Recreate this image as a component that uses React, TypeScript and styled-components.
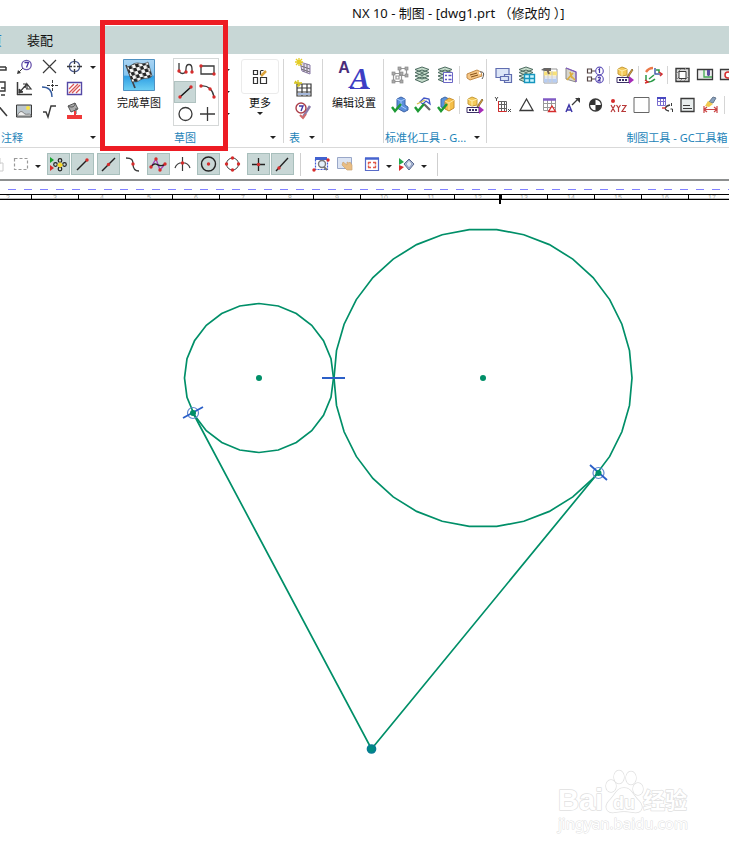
import React from "react";
import styled, { createGlobalStyle, css } from "styled-components";

const GlobalStyle = createGlobalStyle`
  * { box-sizing: border-box; }
  body { margin: 0; background: #fff; overflow-x: hidden; }
  button { font: inherit; color: inherit; margin: 0; padding: 0; border: 0; background: none; }
`;

const ink = "#3a3a3a";
const red = "#d62c2c";
const green = "#008f68";

/* ---------- layout parts ---------- */

const Page = styled.div`
  position: relative;
  display: flex;
  flex-direction: column;
  min-height: 100vh;
  overflow: hidden;
  color: #111;
  font: 11px/16px "Noto Sans", "Noto Sans CJK SC", sans-serif;
`;

const TitleBar = styled.header`
  height: 26px;
  padding-left: 352px;
  font-size: 13px;
  line-height: 26px;
  white-space: pre;
`;

const TabBar = styled.nav`
  display: flex;
  align-items: center;
  gap: 25px;
  height: 28px;
  background: #c8d7d6;
  font-size: 13px;
`;

const Tab = styled.button<{ $clipped?: boolean }>`
  white-space: nowrap;
  ${(p) => p.$clipped && css`margin-left: -24px; color: #1f7fc0;`}
`;

const Ribbon = styled.div`
  display: flex;
  height: 94px;
  border-bottom: 1px solid #d9d9d9;
`;

const Group = styled.section<{ $width: number; $ruled?: boolean }>`
  display: flex;
  flex: none;
  flex-direction: column;
  justify-content: space-between;
  width: ${(p) => p.$width}px;
  background: ${(p) =>
    p.$ruled ? "linear-gradient(#d5d5d5, #d5d5d5) right 5px / 1px 84px no-repeat" : "none"};
`;

const GroupFooter = styled.footer<{ $indent?: number }>`
  display: flex;
  height: 19px;
  padding-left: ${(p) => p.$indent ?? 0}px;
  color: #1c83b8;
  line-height: 20px;
`;

const GroupName = styled.span<{ $start?: boolean }>`
  flex: 1;
  text-align: ${(p) => (p.$start ? "left" : "center")};
  white-space: nowrap;
`;

const ToolRows = styled.div<{ $rowHeight: number; $top: number; $left: number }>`
  display: grid;
  grid-auto-rows: ${(p) => p.$rowHeight}px;
  padding-top: ${(p) => p.$top}px;
  margin-left: ${(p) => p.$left}px;
`;

const ToolRow = styled.div`
  display: flex;
  align-items: center;
`;

const ToolButton = styled.button<{ $width?: number }>`
  display: flex;
  flex: none;
  justify-content: center;
  width: ${(p) => p.$width ?? 23}px;
`;

const Divider = styled.span`
  flex: none;
  width: 1px;
  height: 18px;
  margin: 0 3px 0 2px;
  background: #d5d5d5;
`;

const ArrowButton = styled.button<{ $width?: number }>`
  display: flex;
  flex: none;
  align-items: center;
  justify-content: center;
  width: ${(p) => p.$width ?? 18}px;
  &::after {
    content: "";
    border: 3px solid transparent;
    border-top-color: #222;
    border-bottom: 0;
  }
`;

const SketchRow = styled.div`
  display: flex;
  align-items: flex-start;
  padding: 5px 0 0 8px;
`;

const LargeButton = styled.button<{ $width: number; $gap?: number }>`
  display: flex;
  flex-direction: column;
  align-items: center;
  gap: ${(p) => p.$gap ?? 4}px;
  width: ${(p) => p.$width}px;
  white-space: nowrap;
`;

const Gallery = styled.div`
  display: grid;
  grid-template-columns: 22px 22px;
  grid-auto-rows: 22px;
  margin: 0 0 0 2px;
  outline: 1px solid #d5d8d8;
`;

const GalleryButton = styled.button<{ $on?: boolean }>`
  display: flex;
  align-items: center;
  justify-content: center;
  ${(p) => p.$on && css`background: #c8d7d6; box-shadow: 0 0 0 1px #b0c2c0 inset;`}
`;

const Scroller = styled.div`
  display: grid;
  grid-auto-rows: 22px;
  width: 15px;
  margin-right: 8px;
`;

const MoreFrame = styled.span`
  display: flex;
  align-items: center;
  justify-content: center;
  width: 38px;
  height: 35px;
  border: 1px solid #ebebeb;
  border-radius: 3px;
`;

const SelectionBar = styled.div`
  display: flex;
  height: 33px;
  padding-top: 5px;
  border-bottom: 2px solid #8d8f8f;
`;

const SnapPairs = styled.div`
  display: flex;
  gap: 3px;
  margin: 0 6px 0 3px;
`;

const SnapPair = styled.div`
  display: flex;
  gap: 1px;
`;

const SnapButton = styled.button<{ $on?: boolean; $clipped?: boolean; $gap?: number }>`
  display: flex;
  flex: none;
  align-items: center;
  justify-content: center;
  width: 23px;
  height: 22px;
  margin-left: ${(p) => (p.$clipped ? -18 : p.$gap ?? 0)}px;
  border: 1px solid ${(p) => (p.$on ? "#a8bfbc" : "transparent")};
  background: ${(p) => (p.$on ? "#c8d7d6" : "none")};
`;

const BarDivider = styled.span<{ $gap: number }>`
  width: 1px;
  height: 23px;
  margin-right: ${(p) => p.$gap}px;
  margin-left: ${(p) => (p.$gap ? 0 : 7)}px;
  background: #cfcfcf;
`;

const RulerStrip = styled.svg`
  display: block;
  width: 100%;
  height: 24px;
`;

const Canvas = styled.main`
  flex: 1;
`;

const Drawing = styled.svg`
  display: block;
  width: 100%;
  height: 640px;
`;

const Highlight = styled.div`
  position: absolute;
  left: 100px;
  top: 20px;
  width: 128px;
  height: 131px;
  border: 5px solid #ed1c24;
  pointer-events: none;
`;

const Watermark = styled.svg`
  position: absolute;
  right: 36px;
  bottom: 9px;
  width: 140px;
  height: 72px;
`;

/* ---------- icons, drawn on a 21 x 20 grid ---------- */

const dot = (x: number, y: number) => <circle key={`${x}-${y}`} cx={x} cy={y} r="1.7" fill={red} stroke="none" />;

const layers = (
  <g fill="#c5dccb" stroke="#4d6b60" strokeWidth="1">
    <path d="M3 14.5l7-2.5 7 2.500-7 3zM3 11l7-2.500 7 2.500-7 3zM3 7.500l7-2.500 7 2.500-7 3zM3 4.500l7-2.500 7 2.500-7 3z" />
  </g>
);

const check = <path d="M3 12l3 4 6-7" fill="none" stroke="#1e9a35" strokeWidth="2.400" />;

const partBox = (
  <g>
    <path d="M4 4l4-2 5 2v6l-5 1-4-2z" fill="#f5cb5c" stroke="#c79a35" />
    <path d="M4 4l4 2 5-2M8 6v5" stroke="#fff0ae" fill="none" />
    <path d="M18 4l-4 6-1 2 2-1 4-6z" fill="#e7a93c" stroke="#70511c" strokeWidth=".7" />
    <path d="M3 12.500h12v5H3z" fill="#fff" stroke="#3b2f66" />
    <path d="M5 15h8" stroke="#3b2f66" strokeWidth="2" strokeDasharray="2 1" />
    <path d="M15 11l5 4-5 4z" fill="#a62cb8" />
  </g>
);

const icons: Record<string, React.ReactNode> = {
  clipA: <path d="M4 10h13M4 13h13v-3" fill="none" stroke={ink} strokeWidth="1.500" />,
  clipB: <path d="M4 3h12v9H4zM12 9h4M12 16h4" fill="none" stroke={ink} strokeWidth="1.400" />,
  clipC: <path d="M7 2l11 13" stroke={ink} strokeWidth="1.500" />,
  balloon: (
    <g>
      <path d="M9 11l-4 4" stroke={ink} />
      <path d="M3 17l1-4 3 3z" fill={ink} />
      <circle cx="12.500" cy="8" r="4.700" fill="#fff" stroke="#6a55ad" strokeWidth="1.300" />
      <path d="M10.500 5.500h4l-2 5" fill="none" stroke="#4632a0" strokeWidth="1.300" />
    </g>
  ),
  cross: <path d="M4 3l13 13M17 3L4 16" stroke={ink} strokeWidth="1.200" />,
  target: (
    <g fill="none">
      <circle cx="10.500" cy="9.500" r="5.200" stroke="#4c5b91" strokeWidth="1.300" />
      <path d="M3 9.500h5M13 9.500h5M10.500 2v5M10.500 12v5M9.500 9.500h2" stroke={ink} strokeWidth="1.300" />
    </g>
  ),
  angle: (
    <g fill="none" stroke={ink}>
      <path d="M3.500 3v13M3 15.500h15" strokeWidth="1.500" />
      <path d="M5 14l6-7M9 5h3l-1 4M12 10h5l-4-5v5" strokeWidth="1.200" />
      <path d="M5 14v-4l4 3z" fill={ink} />
    </g>
  ),
  curveCross: (
    <g fill="none">
      <path d="M3 8c6 0 10 3 10 10" stroke="#345b9f" strokeWidth="1.400" />
      <path d="M13.500 1v12M8 6.500h11" stroke={ink} strokeDasharray="3 1" />
    </g>
  ),
  hatch: (
    <g>
      <path d="M3.500 3.500h14v12h-14z" fill="#fff" stroke="#5549a6" strokeWidth="1.400" />
      <path d="M5 10l5-5M5 14l9-9M8 14l8-8M12 14l4-4" stroke="#d95656" strokeWidth="1.300" />
    </g>
  ),
  image: (
    <g>
      <path d="M2.500 4h15v12h-15z" fill="#bcc6cc" stroke={ink} />
      <circle cx="14" cy="7" r="2" fill="#f8e345" />
      <path d="M3 15c4-8 6-3 8-2s4-1 6 1v1z" fill="#eee" stroke="#777" />
    </g>
  ),
  root: <path d="M4 11h3l2 5 3-11h5" fill="none" stroke={ink} strokeWidth="1.400" />,
  bucket: (
    <g>
      <path d="M4 5l7-3 3 6-7 3z" fill="#aaa" stroke="#555" />
      <path d="M4 5c4 2 7 1 7-3M12 7v6" fill="none" stroke="#555" />
      <path d="M11 10v5" stroke="#f03a3a" strokeWidth="2" />
      <path d="M3 14h15v4H3z" fill="#f03a3a" />
    </g>
  ),
  profile: (
    <g fill="none" stroke={ink} strokeWidth="1.300">
      <path d="M4 3v6c0 6 7 6 7 0s6-6 6 0v3" />
      {dot(4, 11)}{dot(11, 12)}{dot(17, 12)}
    </g>
  ),
  rectangle: <g><path d="M4 6h13v8H4z" fill="none" stroke={ink} strokeWidth="1.300" />{dot(4, 6)}{dot(17, 14)}</g>,
  line: <g><path d="M5 15L16 5" stroke="#111" strokeWidth="1.400" />{dot(5, 15)}{dot(16, 5)}</g>,
  arc: <g><path d="M4 4c7-1 12 4 13 11" fill="none" stroke={ink} strokeWidth="1.300" />{dot(4, 4)}{dot(13, 7)}{dot(17, 15)}</g>,
  circle: <circle cx="10.500" cy="10" r="6.500" fill="none" stroke={ink} strokeWidth="1.300" />,
  plus: <path d="M3 10h15M10.500 3v14" stroke={ink} strokeWidth="1.300" />,
  newTable: (
    <g>
      <path d="M7 5l10 3v9L9 14z" fill="#e4dcef" stroke="#8a7ba6" />
      <path d="M8 9l9 3M11 7v8M14 7v9M8 12l9 3" stroke="#77717d" />
      <path d="M6 1v8M2 5h8M3 2l6 6M9 2L3 8" stroke="#e4cd24" strokeWidth="1.300" />
    </g>
  ),
  table: (
    <g>
      <path d="M4 5h14v12H4zM4 9h14M4 13h14M9 5v12M14 5v12" fill="none" stroke={ink} strokeWidth="1.200" />
      <path d="M5 15h12" stroke="#a5b8dc" strokeWidth="2" />
      <path d="M5 1v7M1 4h8M2 2l5 5" stroke="#d5c31d" strokeWidth="1.300" />
    </g>
  ),
  tableCheck: (
    <g>
      <path d="M17 5l-7 11" stroke="#8b7aa9" strokeWidth="2.500" />
      <path d="M7 14l3 3 3-4" fill="none" stroke="#d06a6a" strokeWidth="2" />
      <circle cx="8" cy="7" r="5" fill="#fff" stroke="#ac3e49" strokeWidth="1.400" />
      <path d="M6 5h4l-2 5" fill="none" stroke="#4236a3" strokeWidth="1.400" />
    </g>
  ),
  grayGroup: (
    <g fill="none" stroke="#999" strokeWidth="1.200">
      <path d="M10.500 3.500h7v7h-7zM4.500 8.500h8v8h-8z" />
      <path d="M7 11h3v3H7z" />
      {[[3, 7], [11, 7], [3, 15], [11, 15], [9, 2], [16, 2], [16, 9]].map(([x, y]) => (
        <rect key={`${x}.${y}`} x={x} y={y} width="3" height="3" fill="#aaa" stroke="#888" strokeWidth=".7" />
      ))}
    </g>
  ),
  layers,
  layerList: <g>{layers}<path d="M8.500 7.500h9v10h-9z" fill="#fff" stroke="#6b67c5" /><path d="M10 10.500h2M10 14.500h2M13.500 10.500h3M13.500 14.500h3" stroke="#5d56c5" strokeWidth="1.500" /></g>,
  tag: (
    <g>
      <path d="M3 9l10-4 4 2 1 4-12 4-3-2z" fill="#f6c684" stroke="#c28a48" />
      <path d="M6 10l7-2M7 12l7-2" stroke="#835019" />
      <circle cx="16" cy="8" r="1.200" fill="#fff" /><path d="M16 7c5-1 4 4 2 7" fill="none" stroke="#555" />
    </g>
  ),
  blueCheck: <g><path d="M8 4l4-2 4 2v6l3 2v3l-4 2-7-4z" fill="#5b8fdb" stroke="#3c62a6" /><path d="M8 4l4 2 4-2M12 6v5l5 3" fill="none" stroke="#a3caff" />{check}</g>,
  hammerCheck: <g><path d="M8 7l4-4 5 1 1 5-4-3-3 3z" fill="#fff" stroke="#4155c6" strokeWidth="1.300" /><path d="M12 9l6 6" stroke="#666" strokeWidth="2.200" /><path d="M5 9l8-4" stroke="#d6bd45" strokeWidth="1.300" />{check}</g>,
  cubeCheck: <g><path d="M6 4l4-2 4 2v10l-8-2z" fill="#5b92db" stroke="#3d68a4" /><path d="M10 6l4-3 5 2v8l-5 3-4-2z" fill="#f5bf47" stroke="#c68f33" /><path d="M10 6l4 2 5-3M14 8v7" fill="none" stroke="#ffe5a0" />{check}</g>,
  partBox,
  views: <g fill="#dce5f7" stroke="#606db0" strokeWidth="1.200"><path d="M3 3.500h13v9H3z" /><path d="M11.500 9.500h7v8h-7z" /><path d="M7.500 11.500h8v4h-8z" /></g>,
  layerGrid: <g>{layers}<path d="M8.500 9.500h10v8h-10zM8.500 13.500h10M13.500 9.500v8" fill="#cdf6ff" stroke="#1696be" strokeWidth="1.400" /></g>,
  hammerTable: (
    <g>
      <path d="M5 4h13v14H5z" fill="#fff" stroke="#999" />
      <path d="M5 8.500h13" stroke="#f7e07a" strokeWidth="4" /><path d="M5 15.500h13" stroke="#b7cdf2" strokeWidth="4" />
      <path d="M5 12h13M9 6v12M13 6v12" stroke="#ccc" />
      <path d="M2 5l3-2h7v3H6z" fill="#666" /><path d="M8 4l2 5" stroke="#736257" strokeWidth="2" />
    </g>
  ),
  sheet: <g><path d="M4 3l10 4v10L4 14z" fill="#d7d5cb" stroke="#888" /><path d="M4 3l10 4v10" fill="none" stroke="#805ac0" strokeWidth="1.200" /><path d="M8 7l2 6M5 15l6-7M9 11l4 4" stroke="#dcae3e" strokeWidth="1.700" /></g>,
  numbered: (
    <g fill="#fff" strokeWidth="1.200">
      <path d="M2.500 4h4v4h-4zM2.500 12h4v4h-4zM7 6h4M7 14h4" stroke="#554444" />
      <circle cx="14.500" cy="6" r="3.800" stroke="#6557bb" /><circle cx="14.500" cy="14" r="3.800" stroke="#6557bb" />
      <path d="M13.500 5l1-1v4M13 13c2-2 4 0 0 3h3" fill="none" stroke="#4434a6" />
    </g>
  ),
  axes: (
    <g fill="none" strokeWidth="1.500">
      <path d="M3 7c2-3 4-4 7-4" stroke="#eb7848" strokeWidth="2.400" />
      <path d="M11 10l-5 4M4 17c4 0 7-2 8-3M3 10v6" stroke="#2b9b48" />
      <path d="M12 3v6h6" stroke="#4660a9" /><path d="M13 5h3v3" stroke="#2b9b48" />
      <path d="M16 7l3 2-2 2M2 15l3 2-3 1" stroke={red} />
    </g>
  ),
  frame: <g><path d="M4 3.500h13v13H4z" fill="#ddd" stroke={ink} strokeWidth="1.400" /><path d="M4 9l5-5M4 15l3-3M12 16l5-5M8 16l3-3M12 5l2-2" stroke="#888" /><path d="M7 6.500h7v7H7z" fill="#fff" stroke={ink} /></g>,
  bookmark: <g><path d="M2.500 4.500h15v10h-15z" fill="#eee" stroke={ink} strokeWidth="1.300" /><path d="M9 5v7h8" fill="none" stroke="#42a852" strokeWidth="1.300" /><path d="M12 5h3v5l-1.500 1.500-1.500-1.500z" fill="#5a4ba1" /></g>,
  redRing: <g><path d="M2.500 4.500h15v10h-15z" fill="#eee" stroke={ink} strokeWidth="1.300" /><circle cx="10" cy="10" r="3" fill="#fff" stroke={red} strokeWidth="1.500" /></g>,
  coordGrid: (
    <g fill="none">
      <path d="M5.500 6.500h8v10h-8zM8.500 6.500v10M11.500 6.500v10M5.500 9.500h8M5.500 13.500h8" stroke="#626262" />
      <path d="M5.500 6v10.500h8" stroke={red} />
      <path d="M2 2l1.500 2L5 2M3.500 4v2M15 14l3 3M18 14l-3 3" stroke={ink} strokeWidth=".9" />
    </g>
  ),
  triangle: <path d="M10.500 4l6.500 11.500H4z" fill="#fff" stroke={ink} strokeWidth="1.300" />,
  tableDelta: <g><path d="M4.500 4.500h12v11h-12zM4.500 8.500h12M4.500 12.500h12M8.500 4.500v11M12.500 4.500v11" fill="#fff" stroke="#999" /><path d="M4 4.500h13" stroke="#815ac4" strokeWidth="2.500" /><path d="M13 11l3.500 5.500h-7z" fill="#fff" stroke={red} strokeWidth="1.300" /></g>,
  letterArrow: <g><path d="M4 17l3-7 3 7M5 15h4" fill="none" stroke="#3f38a8" strokeWidth="1.500" /><path d="M10 10l7-7" stroke={ink} strokeWidth="1.200" /><path d="M13 3h5v5z" fill={ink} /></g>,
  quarter: <g><circle cx="10.500" cy="10" r="6" fill="#fff" stroke={ink} strokeWidth="1.300" /><path d="M10.500 10V4a6 6 0 0 0-6 6zM10.500 10v6a6 6 0 0 0 6-6z" fill="#333" /></g>,
  xyz: <g><circle cx="5" cy="6" r="2" fill={red} /><path d="M3 10l4 7M7 10l-4 7M8.500 10l2 3 2-3M10.500 13v4M14 10.500h4l-4 6h4" fill="none" stroke="#b83838" strokeWidth="1.200" /></g>,
  square: <path d="M3 2.500h15v15H3z" fill="#fff" stroke="#666" />,
  tableMark: <g><path d="M3.500 3.500h8v7h-8zM3.500 6.500h8M6.500 3v7M9.500 3v7" fill="#fff" stroke="#7a6ed0" /><path d="M3 3h9" stroke="#4848c0" strokeWidth="2" /><path d="M16 10c-5 1-7 5-1 6" fill="none" stroke={ink} strokeWidth="1.300" /><path d="M8 13h4" stroke={red} strokeWidth="1.300" /><path d="M17.500 8v3M16.500 14h2v3" fill="none" stroke={ink} /></g>,
  note: <g><path d="M4 3.500h13v13H4z" fill="#e9eeee" stroke={ink} strokeWidth="1.300" /><path d="M6 10.500h7M6 13.500h9" stroke={ink} strokeWidth="1.200" /></g>,
  brush: <g><path d="M13 2l3 1-3 5-4-1z" fill="#8aa1bd" stroke="#66788e" /><path d="M8 6l5 3-4 3-4-1z" fill="#f1ca4e" /><path d="M4 11v7M17 11v7M4 14.500h13M7 12l-3 2.500 3 2.500M14 12l3 2.500-3 2.500" fill="none" stroke="#cb4646" strokeWidth="1.200" /></g>,
  faded: <g fill="none" stroke="#ccc"><path d="M17 4v6M16 9h4v8h-4z" /></g>,
  marquee: <path d="M4.500 4.500h13v11h-13z" fill="none" stroke="#999" strokeDasharray="3 2" strokeWidth="1.200" />,
  snapFlower: (
    <g>
      <path d="M2 3l4 3-4 3z" fill="#16a32d" /><path d="M2 11l4 3-4 3z" fill={red} />
      <g fill="none" stroke="#222" strokeWidth="1.200"><circle cx="12" cy="6.500" r="1.800" /><circle cx="12" cy="15" r="1.800" /><circle cx="7.500" cy="10.500" r="1.800" /><circle cx="16.500" cy="10.500" r="1.800" /></g>
      <path d="M12 8l3 3-3 3-3-3z" fill="#f6d929" />
    </g>
  ),
  endPoint: <g><path d="M5 16L15 6" stroke="#222" strokeWidth="1.400" />{dot(15, 6)}</g>,
  midPoint: <g><path d="M4 17L17 4" stroke="#222" strokeWidth="1.400" />{dot(10.5, 10.5)}</g>,
  controlPoint: <g><path d="M4 4c6 0 7 2 7 6s1 7 6 7" fill="none" stroke={ink} strokeWidth="1.300" />{dot(11, 10)}</g>,
  pole: <g><path d="M3 13L8 5l4 11 5-6" fill="none" stroke="#a240b6" strokeWidth="1.300" /><path d="M3 13c5-8 8 3 14-3" fill="none" stroke="#222" strokeWidth="1.300" />{dot(3, 13)}{dot(8, 5)}{dot(12, 16)}{dot(17, 10)}</g>,
  intersection: <g><path d="M3 14c2-7 13-7 15 0M10.500 3v14" fill="none" stroke={ink} strokeWidth="1.200" />{dot(10.5, 9)}</g>,
  center: <g><circle cx="10.500" cy="10" r="7" fill="none" stroke="#222" strokeWidth="1.400" />{dot(10.5, 10)}</g>,
  quadrant: <g><circle cx="10.500" cy="10" r="6" fill="none" stroke={ink} />{dot(10.5, 4)}{dot(10.5, 16)}{dot(4.5, 10)}{dot(16.5, 10)}</g>,
  existing: <g><path d="M4 10.500h13M10.500 4v13" stroke="#222" strokeWidth="1.300" />{dot(10.5, 10.5)}</g>,
  onCurve: <g><path d="M4 17L16 4" stroke="#222" strokeWidth="1.400" />{dot(7, 14)}</g>,
  zoomWindow: <g><path d="M4.500 5.500h12v10h-12z" fill="none" stroke="#425ed8" strokeWidth="1.200" strokeDasharray="2 1" /><path d="M4 4.500h12" stroke="#4262d0" strokeWidth="3" /><circle cx="11" cy="10" r="3.500" fill="#e5f1fb" stroke="#777" strokeWidth="1.400" /><path d="M13 13l3 3" stroke="#777" strokeWidth="2" />{dot(3, 16)}{dot(17, 6)}</g>,
  pan: <g><path d="M3.500 3.500h14v11h-14z" fill="#dce4f3" stroke="#99a7c8" /><path d="M9 8l4 3v-3l2 1 1-1 2 3v5h-5l-5-5z" fill="#e9bd83" stroke="#cba372" strokeWidth=".7" /></g>,
  fit: <g><path d="M4.500 4.500h13v12h-13z" fill="#fff" stroke="#596cc9" strokeWidth="1.200" /><path d="M4 4.500h14" stroke="#4764cf" strokeWidth="2.500" /><path d="M7 8.500h3M12 8.500h3M7 13.500h3M12 13.500h3M7.500 8v2.500M14.500 8v2.500M7.500 11.500v2M14.500 11.500v2" stroke="#e25a4a" strokeWidth="1.400" /></g>,
  orient: <g><path d="M3 4l5 4-5 3z" fill="#23a64a" /><path d="M3 11l5 2-5 4z" fill={red} /><path d="M8 10l5-5 5 5-5 6z" fill="#a8b9d8" stroke="#5b698f" /><path d="M13 6l3 4-3 4-3-4z" fill="#e3eaf6" stroke="#8794b6" strokeWidth=".8" /></g>,
};

const IconSvg = styled.svg`
  display: block;
  flex: none;
`;

const Icon = ({ name }: { name: string }) => (
  <IconSvg width="21" height="20" viewBox="0 0 21 20" fill="none" aria-hidden="true">
    {icons[name]}
  </IconSvg>
);

const Tools = ({ names, width }: { names: string[]; width?: number }) => (
  <>
    {names.map((name, i) =>
      name === "|" ? (
        <Divider key={i} />
      ) : (
        <ToolButton key={i} $width={width} aria-label={name}>
          <Icon name={name} />
        </ToolButton>
      )
    )}
  </>
);

const FlagIcon = () => (
  <IconSvg width="32" height="32" viewBox="0 0 32 32" aria-hidden="true">
    <defs>
      <linearGradient id="sky" x2="0" y2="1">
        <stop offset="0" stopColor="#a9d4f3" /><stop offset=".5" stopColor="#86c5ef" />
        <stop offset=".55" stopColor="#2f9fe4" /><stop offset="1" stopColor="#6ed0f3" />
      </linearGradient>
      <pattern id="checks" width="7" height="7" patternUnits="userSpaceOnUse" patternTransform="translate(5 7) rotate(-14) skewX(8)">
        <path d="M0 0h7v7H0z" fill="#f5f5f5" /><path d="M0 0h3.500v3.500H0zM3.500 3.500H7V7H3.500z" fill="#262626" />
      </pattern>
    </defs>
    <path d="M.5.5h31v31H.5z" fill="url(#sky)" stroke="#4f91c2" />
    <path d="M3 6l9 23" stroke="#42444a" strokeWidth="1.700" />
    <path d="M4 8c5-1 6-4 10-4s6 2 11-1l4 14c-4 4-8 1-12 4s-5 1-8 2z" fill="url(#checks)" stroke="#444" strokeWidth=".7" />
  </IconSvg>
);

const MoreIcon = () => (
  <IconSvg width="16" height="16" viewBox="0 0 16 16" fill="none" stroke="#333" strokeWidth="1.200" aria-hidden="true">
    <path d="M1.500 1.500h4v4h-4zM1.500 8.500h4v6h-4zM8.500 8.500h6v6h-6zM8.500 1.500h3M8.500 2v4" />
    <path d="M14 2L9 7" stroke="#dba33b" strokeWidth="2.500" />
  </IconSvg>
);

const LetterIcon = styled.span`
  display: flex;
  justify-content: center;
  width: 34px;
  height: 32px;
  color: #4a2c7a;
  font: bold 16px/18px "Liberation Sans", sans-serif;
`;

const ItalicLetter = styled.em`
  height: 30px;
  border-bottom: 1px solid #3d3ec4;
  color: #3d3ec4;
  font: italic bold 30px/38px "Liberation Serif", serif;
`;

/* ---------- ruler and sketch ---------- */

const Ruler = () => (
  <RulerStrip aria-hidden="true">
    <defs><clipPath id="band"><rect x="0" y="14" width="4000" height="4" /></clipPath></defs>
    <path d="M8 8.500H4000" stroke="#8080ff" strokeWidth="1" strokeDasharray="8 8" />
    <path d="M0 13.500H4000M0 18.500H4000" stroke="#000" />
    <path d="M0 17.500H4000" stroke="#bbb" />
    <g clipPath="url(#band)" fill="#aaa" fontSize="7" textAnchor="middle" fontFamily="Liberation Sans, sans-serif">
      {Array.from({ length: 16 }, (_, i) => (
        <text key={i} x={Math.round(8 + i * 46.95)} y="19">{i + 2}</text>
      ))}
    </g>
    {Array.from({ length: 60 }, (_, i) => (
      <path key={i} d={`M${Math.round(8 + i * 46.95) + 23.5} 14v5`} stroke="#000" />
    ))}
    <path d="M500 14v9" stroke="#000" strokeWidth="2" />
  </RulerStrip>
);

const facets = (cx: number, cy: number, r: number, n: number) =>
  Array.from({ length: n }, (_, i) => {
    const a = (i * 2 * Math.PI) / n;
    return `${(cx + r * Math.cos(a)).toFixed(1)},${(cy + r * Math.sin(a)).toFixed(1)}`;
  }).join(" ");

const Sketch = () => (
  <Drawing role="img" aria-label="Sketch">
    <g transform="translate(0 -205)" fill="none" stroke={green} strokeWidth="1.700">
      <polygon points={facets(259, 378, 74.5, 24)} />
      <polygon points={facets(483, 378, 149, 34)} />
      <path d="M193 413L371.500 749L598 473" />
      <g fill={green} stroke="none">
        <circle cx="259" cy="378" r="3" /><circle cx="483" cy="378" r="3" />
      </g>
      <circle cx="371.500" cy="749" r="4" fill="#008b82" stroke="#087c94" />
      <g stroke="#6189cf" strokeWidth="1.200"><circle cx="193" cy="413" r="5.500" /><circle cx="598.500" cy="473" r="5.500" /></g>
      <path d="M322 378h23M183 418l20-11M590 465l17 15" stroke="#2b5fc7" strokeWidth="1.800" />
      <g fill={green} stroke="none">
        <circle cx="193" cy="413" r="3" /><circle cx="598.500" cy="473" r="3" />
      </g>
    </g>
  </Drawing>
);

const Brand = () => (
  <Watermark viewBox="0 0 140 72" aria-label="Baidu 经验">
    <g fill="#fff" stroke="#e0e0e0" strokeWidth="1.400" strokeLinejoin="round" paintOrder="stroke">
      <g fontFamily="Liberation Sans, Noto Sans CJK SC, sans-serif" fontWeight="700">
        <text x="5" y="43" fontSize="29">Bai</text>
        <text x="90" y="41" fontSize="22">经验</text>
      </g>
      <path d="M71 21c-8 0-9 8-15 13-6 7-1 13 7 11 6-1 10-1 16 0 9 2 13-4 7-11-6-5-7-13-15-13z" />
      <ellipse cx="58" cy="19" rx="5" ry="6" /><ellipse cx="66" cy="10" rx="5" ry="6.500" />
      <ellipse cx="78" cy="11" rx="5" ry="6.500" /><ellipse cx="85" cy="22" rx="5" ry="6" />
      <text x="71" y="42" fontSize="18" fontWeight="700" textAnchor="middle" fontFamily="Liberation Sans, sans-serif">du</text>
      <text x="5" y="62" fontSize="15" strokeWidth="1" fontFamily="Noto Sans, sans-serif">jingyan.baidu.com</text>
    </g>
  </Watermark>
);

const snapPairs: [string, boolean][][] = [
  [["snapFlower", true], ["endPoint", true]],
  [["midPoint", true], ["controlPoint", false]],
  [["pole", true], ["intersection", false]],
  [["center", true], ["quadrant", false]],
  [["existing", true], ["onCurve", true]],
];

export default function App() {
  return (
    <Page>
      <GlobalStyle />
      <TitleBar>NX 10 - 制图 - [dwg1.prt （修改的 ）]</TitleBar>
      <TabBar>
        <Tab $clipped>主页</Tab>
        <Tab>装配</Tab>
      </TabBar>

      <Ribbon>
        <Group $width={98}>
          <ToolRows $rowHeight={22} $top={2} $left={-13}>
            <ToolRow><Tools width={25} names={["clipA", "balloon", "cross", "target"]} /><ArrowButton $width={11} aria-label="More symbols" /></ToolRow>
            <ToolRow><Tools width={25} names={["clipB", "angle", "curveCross", "hatch"]} /></ToolRow>
            <ToolRow><Tools width={25} names={["clipC", "image", "root", "bucket"]} /></ToolRow>
          </ToolRows>
          <GroupFooter $indent={1}><GroupName $start>注释</GroupName><ArrowButton $width={11} aria-label="注释" /></GroupFooter>
        </Group>

        <Group $width={186} $ruled>
          <SketchRow>
            <LargeButton $width={66}><FlagIcon />完成草图</LargeButton>
            <Gallery>
              {["profile", "rectangle", "line", "arc", "circle", "plus"].map((name) => (
                <GalleryButton key={name} $on={name === "line"} aria-label={name}><Icon name={name} /></GalleryButton>
              ))}
            </Gallery>
            <Scroller>
              <ArrowButton aria-label="Scroll up" /><ArrowButton aria-label="Scroll down" /><ArrowButton aria-label="Expand" />
            </Scroller>
            <LargeButton $width={38} $gap={1}>
              <MoreFrame><MoreIcon /></MoreFrame>更多
              <ArrowButton as="span" />
            </LargeButton>
          </SketchRow>
          <GroupFooter $indent={10}><GroupName>草图</GroupName><ArrowButton $width={22} aria-label="草图" /></GroupFooter>
        </Group>

        <Group $width={39} $ruled>
          <ToolRows $rowHeight={22} $top={2} $left={8}>
            {["newTable", "table", "tableCheck"].map((name) => <ToolRow key={name}><Tools names={[name]} /></ToolRow>)}
          </ToolRows>
          <GroupFooter $indent={5}><GroupName $start>表</GroupName><ArrowButton $width={22} aria-label="表" /></GroupFooter>
        </Group>

        <Group $width={61} $ruled>
          <SketchRow>
            <LargeButton $width={46}>
              <LetterIcon>A<ItalicLetter>A</ItalicLetter></LetterIcon>编辑设置
            </LargeButton>
          </SketchRow>
        </Group>

        <Group $width={103} $ruled>
          <ToolRows $rowHeight={30} $top={6} $left={4}>
            <ToolRow><Tools names={["grayGroup", "layers", "layerList", "|", "tag"]} /></ToolRow>
            <ToolRow><Tools names={["blueCheck", "hammerCheck", "cubeCheck", "|", "partBox"]} /></ToolRow>
          </ToolRows>
          <GroupFooter $indent={1}><GroupName $start>标准化工具 - G...</GroupName><ArrowButton $width={20} aria-label="标准化工具" /></GroupFooter>
        </Group>

        <Group $width={380}>
          <ToolRows $rowHeight={30} $top={6} $left={5}>
            <ToolRow><Tools names={["views", "layerGrid", "hammerTable", "sheet", "numbered", "|", "partBox", "|", "axes", "|", "frame", "bookmark", "redRing"]} /></ToolRow>
            <ToolRow><Tools names={["coordGrid", "triangle", "tableDelta", "letterArrow", "quarter", "xyz", "square", "tableMark", "note", "brush", "|"]} /></ToolRow>
          </ToolRows>
          <GroupFooter><GroupName>制图工具 - GC工具箱</GroupName></GroupFooter>
        </Group>
      </Ribbon>

      <SelectionBar>
        <SnapButton $clipped aria-label="Filter"><Icon name="faded" /></SnapButton>
        <SnapButton $gap={4} aria-label="Marquee"><Icon name="marquee" /></SnapButton>
        <ArrowButton $width={12} aria-label="Marquee options" />
        <SnapPairs>
          {snapPairs.map((pair, i) => (
            <SnapPair key={i}>
              {pair.map(([name, on]) => (
                <SnapButton key={name} $on={on} aria-pressed={on} aria-label={name}><Icon name={name} /></SnapButton>
              ))}
            </SnapPair>
          ))}
        </SnapPairs>
        <BarDivider $gap={9} />
        <SnapButton aria-label="Zoom"><Icon name="zoomWindow" /></SnapButton>
        <SnapButton aria-label="Pan"><Icon name="pan" /></SnapButton>
        <SnapButton $gap={4} aria-label="Fit"><Icon name="fit" /></SnapButton>
        <ArrowButton $width={12} aria-label="Fit options" />
        <SnapButton aria-label="Orient"><Icon name="orient" /></SnapButton>
        <ArrowButton $width={12} aria-label="Orient options" />
        <BarDivider $gap={0} />
      </SelectionBar>

      <Ruler />
      <Canvas><Sketch /></Canvas>
      <Highlight />
      <Brand />
    </Page>
  );
}
